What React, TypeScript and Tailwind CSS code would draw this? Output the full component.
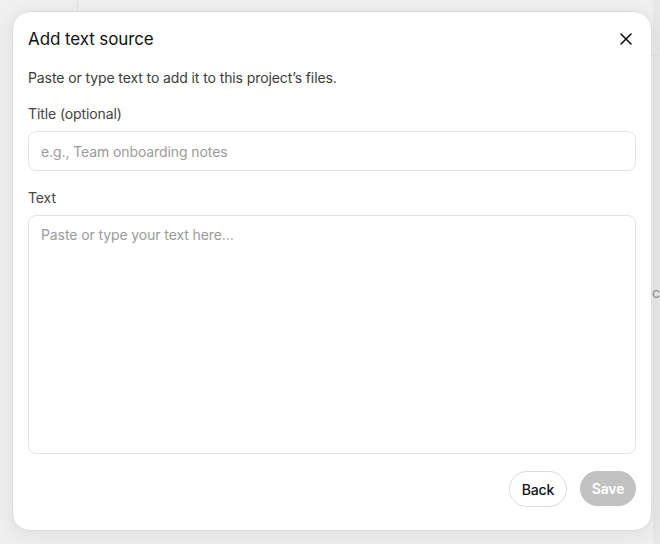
import React from "react";

export default function App() {
  return (
    <div
      className="relative w-[660px] h-[544px] overflow-hidden bg-[#f0f0f0]"
      style={{ fontFamily: "Inter, 'Noto Sans', sans-serif" }}
    >
      {/* background hints */}
      <div className="absolute left-[77px] top-0 h-[20px] w-px bg-[#e3e3e3]" />
      <div className="absolute left-[653px] top-0 h-full w-[7px] bg-[#e8e8e8]" />
      <div className="absolute left-[640px] top-[55px] w-[20px] h-px bg-[#e0e0e0]" />
      <div className="absolute left-[652px] top-[282px] text-[14px] text-[#8a8a8a]">c</div>

      {/* dialog */}
      <div className="absolute left-[12px] top-[11px] w-[640px] h-[520px] bg-white rounded-[18px] border border-[#dcdcdc] shadow-[0_4px_24px_rgba(0,0,0,0.08)] px-[15px] pt-[15px] pb-[23px] flex flex-col tracking-[-0.1px]">
        <div className="flex items-center justify-between h-[24px]">
          <h2 className="text-[17px] leading-6 text-[#111] font-normal">Add text source</h2>
          <button className="w-[24px] h-[24px] flex items-center justify-center mr-[-2px] text-[#111]">
            <svg width="14" height="14" viewBox="0 0 14 14" fill="none">
              <path d="M2 2L12 12M12 2L2 12" stroke="currentColor" strokeWidth="1.6" strokeLinecap="round" />
            </svg>
          </button>
        </div>
        <p className="mt-[17px] text-[14px] leading-5 text-[#3c3c3c]">
          Paste or type text to add it to this project’s files.
        </p>
        <label className="mt-[16px] text-[14px] leading-5 text-[#444]">Title (optional)</label>
        <div className="mt-[7px] h-[40px] rounded-[8px] border border-[#e3e3e3] flex items-center px-[12px] pt-[1px] text-[14px] text-[#9b9b9b]">
          e.g., Team onboarding notes
        </div>
        <label className="mt-[17px] text-[14px] leading-5 text-[#444]">Text</label>
        <div className="mt-[7px] h-[240px] rounded-[8px] border border-[#e3e3e3] px-[12px] pt-[9px] text-[14px] leading-5 text-[#9b9b9b]">
          Paste or type your text here…
        </div>
        <div className="mt-[17px] flex justify-end gap-[13px]">
          <button className="h-[36px] w-[58px] rounded-full border border-[#dadada] bg-white text-[14px] font-medium text-[#111]">
            Back
          </button>
          <button className="h-[35px] w-[56px] rounded-full bg-[#c2c2c2] text-[14px] font-semibold text-white">
            Save
          </button>
        </div>
      </div>
    </div>
  );
}
